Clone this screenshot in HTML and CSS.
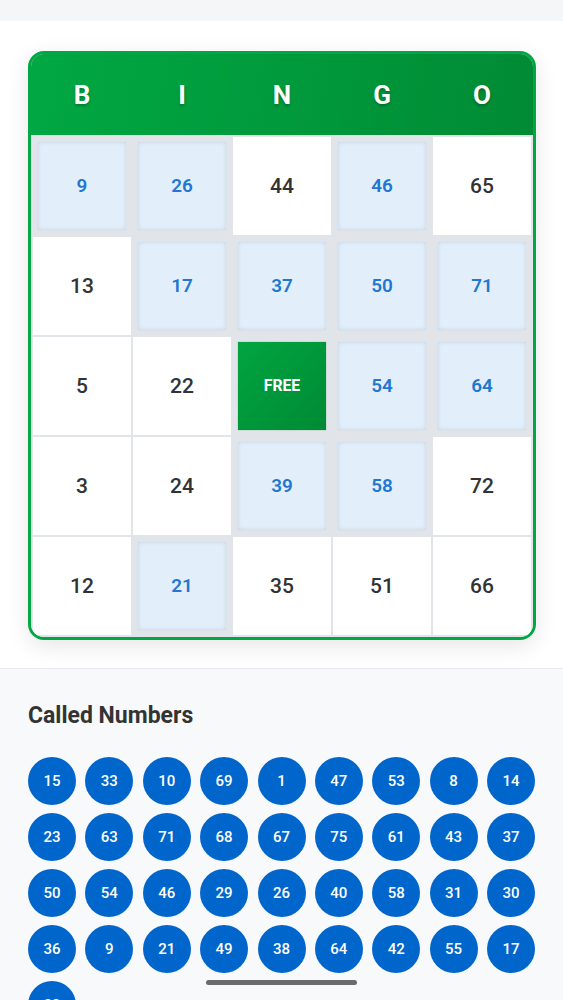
FILE: index.html
```html
<!DOCTYPE html>
<html>
<head>
<meta charset="utf-8">
<link rel="stylesheet" href="styles.css">
</head>
<body>
<div class="topbar"></div>
<main class="board-area">
  <div class="card">
    <div class="header">
      <span>B</span><span>I</span><span>N</span><span>G</span><span>O</span>
    </div>
    <div class="grid">
      <div class="cell marked"><span>9</span></div>
      <div class="cell marked"><span>26</span></div>
      <div class="cell"><span>44</span></div>
      <div class="cell marked"><span>46</span></div>
      <div class="cell"><span>65</span></div>

      <div class="cell"><span>13</span></div>
      <div class="cell marked"><span>17</span></div>
      <div class="cell marked"><span>37</span></div>
      <div class="cell marked"><span>50</span></div>
      <div class="cell marked"><span>71</span></div>

      <div class="cell"><span>5</span></div>
      <div class="cell"><span>22</span></div>
      <div class="cell free"><span>FREE</span></div>
      <div class="cell marked"><span>54</span></div>
      <div class="cell marked"><span>64</span></div>

      <div class="cell"><span>3</span></div>
      <div class="cell"><span>24</span></div>
      <div class="cell marked"><span>39</span></div>
      <div class="cell marked"><span>58</span></div>
      <div class="cell"><span>72</span></div>

      <div class="cell"><span>12</span></div>
      <div class="cell marked"><span>21</span></div>
      <div class="cell"><span>35</span></div>
      <div class="cell"><span>51</span></div>
      <div class="cell"><span>66</span></div>
    </div>
  </div>
</main>
<section class="called">
  <h2 class="called-title">Called Numbers</h2>
  <div class="balls">
    <div class="ball">15</div><div class="ball">33</div><div class="ball">10</div><div class="ball">69</div><div class="ball">1</div><div class="ball">47</div><div class="ball">53</div><div class="ball">8</div><div class="ball">14</div>
    <div class="ball">23</div><div class="ball">63</div><div class="ball">71</div><div class="ball">68</div><div class="ball">67</div><div class="ball">75</div><div class="ball">61</div><div class="ball">43</div><div class="ball">37</div>
    <div class="ball">50</div><div class="ball">54</div><div class="ball">46</div><div class="ball">29</div><div class="ball">26</div><div class="ball">40</div><div class="ball">58</div><div class="ball">31</div><div class="ball">30</div>
    <div class="ball">36</div><div class="ball">9</div><div class="ball">21</div><div class="ball">49</div><div class="ball">38</div><div class="ball">64</div><div class="ball">42</div><div class="ball">55</div><div class="ball">17</div>
    <div class="ball">39</div>
  </div>
</section>
<div class="home-indicator"></div>
</body>
</html>
```

FILE: styles.css
```css
* {
  box-sizing: border-box;
}

html, body {
  margin: 0;
  padding: 0;
}

body {
  font-family: Roboto, "Liberation Sans", Arial, sans-serif;
  background: #f8f9fa;
  color: #333333;
}

.topbar {
  height: 21px;
  background: #f5f6f8;
}

.board-area {
  background: #ffffff;
  padding: 30px 27px 28px 28px;
  border-bottom: 1px solid #e6e8eb;
}

.card {
  border: 3px solid #00a845;
  border-radius: 16px;
  overflow: hidden;
  background: #e1e4e8;
  box-shadow: 0 6px 22px rgba(0, 0, 0, 0.10);
}

.header {
  margin: -3px -3px 0 -3px;
  height: 84px;
  padding: 0 5px;
  display: grid;
  grid-template-columns: repeat(5, 1fr);
  gap: 2px;
  align-items: center;
  background: linear-gradient(100deg, #00a843 0%, #009a3c 50%, #008a34 100%);
}

.header span {
  text-align: center;
  color: #ffffff;
  font-weight: 700;
  font-size: 26px;
  padding-top: 3px;
  text-shadow: 0 2px 3px rgba(0, 0, 0, 0.25);
}

.grid {
  display: grid;
  grid-template-columns: repeat(5, 1fr);
  gap: 2px;
  padding: 2px;
  background: #e1e4e8;
}

.cell {
  height: 98px;
  background: #ffffff;
  display: flex;
  align-items: center;
  justify-content: center;
  font-size: 21px;
  font-weight: 500;
  color: #333333;
}

.cell.marked {
  background: #e2effb;
  color: #2277d0;
  font-weight: 600;
  transform: scale(0.9);
  box-shadow: inset 0 0 5px rgba(60, 80, 110, 0.18), 0 1px 3px rgba(0, 0, 0, 0.06);
}

.cell.free {
  background: linear-gradient(135deg, #00a540 0%, #008a35 100%);
  color: #ffffff;
  font-size: 17.5px;
  font-weight: 700;
  transform: scale(0.9);
}

.called {
  padding: 34px 28px 0 28px;
}

.called-title {
  margin: 0 0 28px 0;
  font-size: 23px;
  line-height: 26px;
  font-weight: 700;
  color: #333333;
}

.balls {
  display: grid;
  grid-template-columns: repeat(9, 48px);
  justify-content: space-between;
  row-gap: 8px;
}

.ball {
  width: 48px;
  height: 48px;
  border-radius: 50%;
  background: #0066cc;
  color: #ffffff;
  display: flex;
  align-items: center;
  justify-content: center;
  font-size: 15px;
  font-weight: 500;
}

.home-indicator {
  position: fixed;
  left: 206px;
  top: 980px;
  width: 151px;
  height: 5px;
  border-radius: 3px;
  background: #6b6b6b;
}
```
